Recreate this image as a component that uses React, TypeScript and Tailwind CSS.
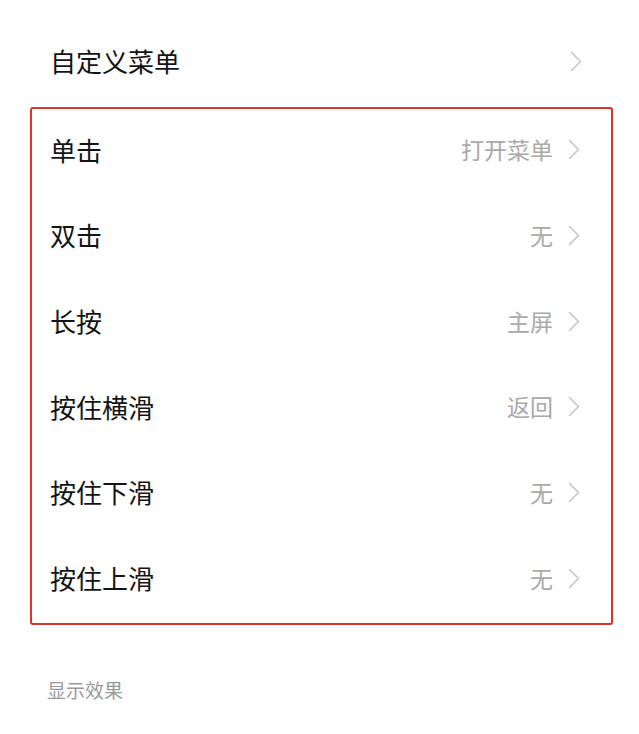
import * as React from "react";

const rows = [
  { label: "单击", value: "打开菜单" },
  { label: "双击", value: "无" },
  { label: "长按", value: "主屏" },
  { label: "按住横滑", value: "返回" },
  { label: "按住下滑", value: "无" },
  { label: "按住上滑", value: "无" },
];

function Chevron() {
  return (
    <svg width="12" height="21" viewBox="0 0 12 21" fill="none" className="shrink-0">
      <path d="M1.5 1.5 L10.5 10.5 L1.5 19.5" stroke="#c6c6c6" strokeWidth="1.6" strokeLinecap="round" strokeLinejoin="round" />
    </svg>
  );
}

function Row({ label, value }: { label: string; value?: string }) {
  return (
    <div className="flex items-center justify-between h-[85.67px] pb-[4px] pl-[18px] pr-[31px]">
      <span className="text-[26px] text-[#141414] leading-none">{label}</span>
      <div className="flex items-center gap-[15px]">
        {value && <span className="text-[23px] text-[#a9a9a9] leading-none">{value}</span>}
        <Chevron />
      </div>
    </div>
  );
}

export default function App() {
  return (
    <div
      className="w-[639px] h-[734px] bg-white pl-[30px] pr-[26px] pt-[18px]"
      style={{ fontFamily: '"Noto Sans CJK SC", "Noto Sans", sans-serif' }}
    >
      <div className="flex items-center justify-between h-[89px] pb-[3px] pl-[20px] pr-[31px]">
        <span className="text-[26px] text-[#141414] leading-none">自定义菜单</span>
        <Chevron />
      </div>
      <div className="border-2 border-[#d8362d] rounded-[3px]">
        {rows.map(r => (
          <Row key={r.label} label={r.label} value={r.value} />
        ))}
      </div>
      <div className="pt-[55px] pl-[17px] text-[19px] text-[#9a9a9a] leading-none">显示效果</div>
    </div>
  );
}
